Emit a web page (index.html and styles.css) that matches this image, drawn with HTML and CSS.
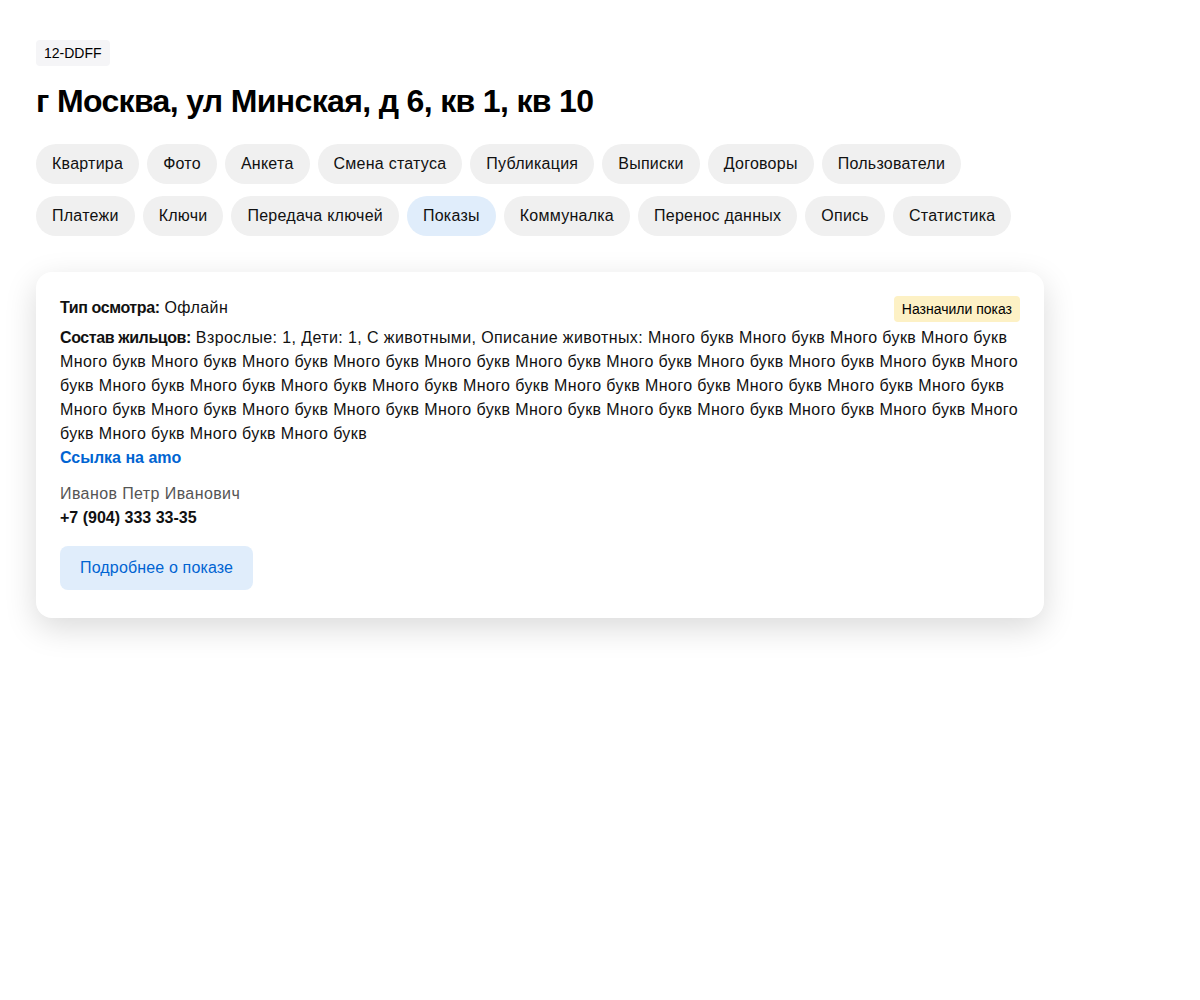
FILE: index.html
```html
<!DOCTYPE html>
<html lang="ru">
<head>
<meta charset="utf-8">
<link rel="stylesheet" href="styles.css">
</head>
<body>
<div class="page">
  <div class="code">12-DDFF</div>
  <h1 class="title">г Москва, ул Минская, д 6, кв 1, кв 10</h1>
  <nav class="tabs">
    <span class="tab">Квартира</span>
    <span class="tab">Фото</span>
    <span class="tab">Анкета</span>
    <span class="tab">Смена статуса</span>
    <span class="tab">Публикация</span>
    <span class="tab">Выписки</span>
    <span class="tab">Договоры</span>
    <span class="tab">Пользователи</span>
    <span class="tab">Платежи</span>
    <span class="tab">Ключи</span>
    <span class="tab">Передача ключей</span>
    <span class="tab tab-active">Показы</span>
    <span class="tab">Коммуналка</span>
    <span class="tab">Перенос данных</span>
    <span class="tab">Опись</span>
    <span class="tab">Статистика</span>
  </nav>
  <div class="card">
    <div class="card-head">
      <div class="line"><b>Тип осмотра:</b> Офлайн</div>
      <span class="status">Назначили показ</span>
    </div>
    <div class="line para"><b>Состав жильцов:</b> Взрослые: 1, Дети: 1, С животными, Описание животных: Много букв Много букв Много букв Много букв Много букв Много букв Много букв Много букв Много букв Много букв Много букв Много букв Много букв Много букв Много букв Много букв Много букв Много букв Много букв Много букв Много букв Много букв Много букв Много букв Много букв Много букв Много букв Много букв Много букв Много букв Много букв Много букв Много букв Много букв Много букв Много букв Много букв Много букв Много букв</div>
    <a class="link" href="#">Ссылка на amo</a>
    <div class="person">
      <div class="name">Иванов Петр Иванович</div>
      <div class="phone">+7 (904) 333 33-35</div>
    </div>
    <button class="more">Подробнее о показе</button>
  </div>
</div>
</body>
</html>
```
FILE: styles.css
```css
* { box-sizing: border-box; }
body {
  margin: 0;
  font-family: "Liberation Sans", Arial, sans-serif;
  color: #000;
  background: #fff;
}
.page {
  padding: 40px 36px;
  width: 1080px;
}
.code {
  display: inline-block;
  height: 26px;
  line-height: 26px;
  padding: 0 8px;
  font-size: 14px;
  background: #f5f5f7;
  border-radius: 4px;
}
.title {
  margin: 15px 0 23px;
  font-size: 32px;
  line-height: 40px;
  font-weight: 700;
  letter-spacing: -0.65px;
}
.tabs {
  display: flex;
  flex-wrap: wrap;
  gap: 12px 8px;
  width: 1000px;
}
.tab {
  height: 40px;
  line-height: 40px;
  padding: 0 16px;
  font-size: 16px;
  letter-spacing: 0.25px;
  border-radius: 20px;
  background: #f0f0f0;
  color: #111;
}
.tab-active { background: #e0edfb; }
.card {
  margin-top: 36px;
  width: 1008px;
  padding: 24px 24px 28px;
  background: #fff;
  border-radius: 16px;
  box-shadow: 0 10px 32px rgba(0, 0, 0, 0.15);
}
.card-head {
  display: flex;
  justify-content: space-between;
  align-items: flex-start;
}
.line {
  font-size: 16px;
  line-height: 24px;
  color: #111;
  letter-spacing: 0.4px;
}
.line b { letter-spacing: -0.4px; }
.para { margin-top: 4px; }
.status {
  height: 26px;
  line-height: 26px;
  padding: 0 8px;
  font-size: 14px;
  background: #fdf1c5;
  border-radius: 4px;
}
.link {
  display: block;
  font-size: 16px;
  line-height: 24px;
  font-weight: 700;
  color: #0064d2;
  text-decoration: none;
}
.person { margin-top: 12px; }
.name {
  font-size: 16px;
  line-height: 24px;
  color: #555;
  letter-spacing: 0.4px;
}
.phone {
  font-size: 16px;
  line-height: 24px;
  font-weight: 700;
  color: #111;
}
.more {
  display: block;
  margin-top: 16px;
  height: 44px;
  padding: 0 20px;
  font-family: inherit;
  font-size: 16px;
  letter-spacing: 0.15px;
  color: #0064d2;
  background: #e0edfb;
  border: 0;
  border-radius: 8px;
}
```
